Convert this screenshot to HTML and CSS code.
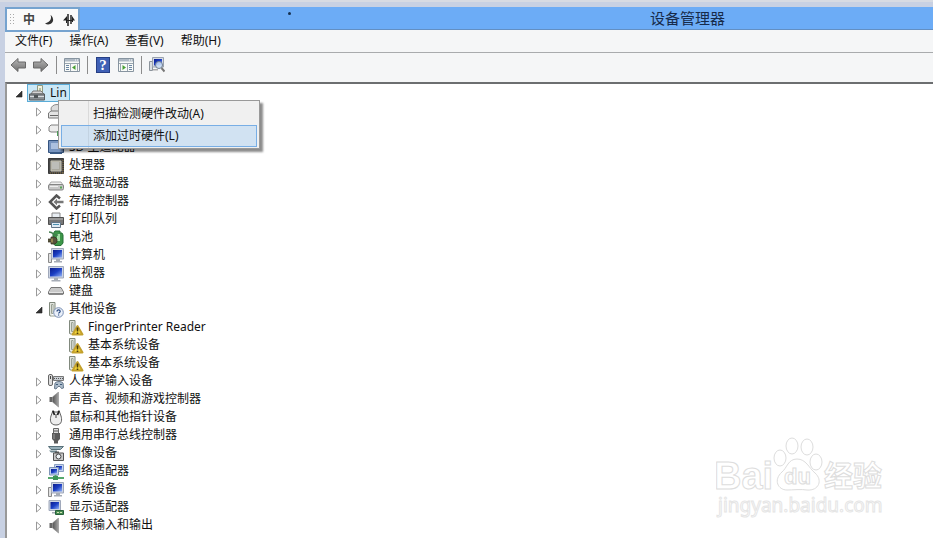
FILE: index.html
```html
<!DOCTYPE html>
<html lang="zh-CN">
<head>
  <meta charset="UTF-8">
  <meta name="viewport" content="width=device-width, initial-scale=1.0">
  <title>设备管理器</title>
  <link rel="stylesheet" href="styles.css">
</head>
<body>
  <!-- shared icons -->
  <svg class="defs" aria-hidden="true">
    <defs>
      <linearGradient id="metal" x1="0" y1="0" x2="0" y2="1"><stop offset="0" stop-color="#b8b8b8"/><stop offset="1" stop-color="#6e6e6e"/></linearGradient>
      <linearGradient id="screen" x1="0" y1="0" x2="1" y2="1"><stop offset="0" stop-color="#0b1c8c"/><stop offset=".5" stop-color="#1c3fc4"/><stop offset="1" stop-color="#8fb0f5"/></linearGradient>
      <linearGradient id="speaker" x1="0" y1="0" x2="1" y2="0"><stop offset="0" stop-color="#555"/><stop offset="1" stop-color="#a5a5a5"/></linearGradient>
    </defs>
    <symbol id="closed" viewBox="0 0 8 10"><path d="M1.500 1v8L6 5z" fill="#fff" stroke="#999"/></symbol>
    <symbol id="open" viewBox="0 0 8 10"><path d="M7 2v6H1z" fill="#333" stroke="#222" stroke-width=".6"/></symbol>
    <symbol id="arrow" viewBox="0 0 16 16"><path d="M1 8l7-6.500V5h7.500v6H8v3.500z" fill="url(#metal)" stroke="#686868"/></symbol>
    <symbol id="panel" viewBox="0 0 16 14">
      <path d="M.5.5h15v13H.5z" fill="#f8faf8" stroke="#8794a0"/>
      <path d="M1 1h14v2.500H1z" fill="#aeb9c4"/><path d="M11 2h1m1 0h1" stroke="#fff"/>
      <path d="M1 5.500h14M6.500 5v8M13.500 5v8" stroke="#9aa6b0"/>
      <path d="M2 7.500h3M2 9.500h3M2 11.500h3" stroke="#6b86a3"/>
      <path d="M11.500 7v5L8 9.500z" fill="#48a034"/>
    </symbol>
    <symbol id="panel-right" viewBox="0 0 16 14">
      <path d="M.5.5h15v13H.5z" fill="#f8faf8" stroke="#8794a0"/>
      <path d="M1 1h14v2.500H1z" fill="#aeb9c4"/><path d="M11 2h1m1 0h1" stroke="#fff"/>
      <path d="M1 5.500h14M9.500 5v8M2.500 5v8" stroke="#9aa6b0"/>
      <path d="M11 7.500h3M11 9.500h3M11 11.500h3" stroke="#6b86a3"/>
      <path d="M4.500 7v5L8 9.500z" fill="#48a034"/>
    </symbol>
    <symbol id="scan" viewBox="0 0 16 16">
      <path d="M.5 4.500h3v9h-3z" fill="#d8dde2" stroke="#8c949c"/>
      <path d="M3.500.5h11v9.500h-11z" fill="#d5dae4" stroke="#9aa2ae"/><path d="M5 2h8v6.500H5z" fill="url(#screen)"/>
      <path d="M4 12h5v1.500H4z" fill="#aaa"/>
      <circle cx="10" cy="8" r="3.500" fill="#cfe3fa" fill-opacity=".8" stroke="#6d7d90"/><path d="M12.500 11l3 3.500" stroke="#777" stroke-width="2"/>
    </symbol>
    <symbol id="root" viewBox="0 0 16 16">
      <path d="M8.500.5h5V9h-5z" fill="#f3f1de" stroke="#8f9a83"/><path d="M10 3h2v4h-2z" fill="#b5c39b"/>
      <path d="M2 9l2-3h8l3 3z" fill="#d5d5d5" stroke="#777"/><path d="M.5 9h15v6H.5z" fill="#8a9094" stroke="#565b5e"/>
      <path d="M1 11.500h14" stroke="#d9dde0"/><path d="M5 10h4v3H5z" fill="#4f5558"/>
    </symbol>
    <symbol id="disc" viewBox="0 0 16 16">
      <ellipse cx="9" cy="5" rx="6" ry="4.500" fill="#dcdcdc" stroke="#888"/><path d="M.5 9L3 7h10l2.500 2v5H.5z" fill="#e3e3e3" stroke="#777"/><path d="M2 11.500h8" stroke="#666"/>
    </symbol>
    <symbol id="ide" viewBox="0 0 16 16"><path d="M1 5l2-2h12v7H3L1 9z" fill="#ececec" stroke="#808080"/><path d="M9 9h5v5H9z" fill="#4c9b58"/></symbol>
    <symbol id="sd" viewBox="0 0 16 16"><path d="M.5.500h15v12H.5z" fill="#7794bf" stroke="#345480"/><path d="M3 3h9v6H3z" fill="#abc0df"/><path d="M2 13h12" stroke="#395984" stroke-width="2"/></symbol>
    <symbol id="cpu" viewBox="0 0 16 16"><path d="M.5.5h15v15H.5z" fill="#484848" stroke="#3a3a3a"/><path d="M3 3h10v10H3z" fill="#aaa89e" stroke="#c7c4b5"/><path d="M4 4h7v7H4z" fill="#bdbdb9"/><path d="M15 2v13M2 15h13" stroke="#8c7445" stroke-dasharray="1 1"/></symbol>
    <symbol id="disk" viewBox="0 0 16 16"><path d="M1 9l2-3h10l2 3z" fill="#efefef" stroke="#aaa"/><rect x=".5" y="8.500" width="15" height="5.500" rx="1.500" fill="#c6c6c6" stroke="#858585"/><path d="M2 10.500h8" stroke="#eee"/><path d="M12 11.500h2" stroke="#57a457" stroke-width="2"/></symbol>
    <symbol id="storage" viewBox="0 0 16 16"><path d="M12 4.500L8.500 1.500 2 8l6.500 6.500L12 11.500" fill="none" stroke="#555" stroke-width="2.500"/><path d="M5.500 8L9 4.800v2h6.500v2.400H9v2z" fill="#777"/></symbol>
    <symbol id="printer" viewBox="0 0 16 16"><path d="M4 1h8v5H4z" fill="#e8edf2" stroke="#888"/><path d="M.5 5.500h15v7H.5z" fill="#777" stroke="#4f4f4f"/><path d="M1 7h14" stroke="#bbb"/><path d="M3.500 10.500h9v5h-9z" fill="#dfeaf3" stroke="#627587"/><path d="M5 12.500h6" stroke="#4d90b0"/></symbol>
    <symbol id="battery" viewBox="0 0 16 16"><path d="M7 1h5v2h2l1 2v8l-2 2.500H7L5 13V4z" fill="#3d9648" stroke="#267136"/><path d="M9 4h3v7H9z" fill="#a5dfa7"/><path d="M1 2c5 0 4 4 9 3" fill="none" stroke="#437e4e" stroke-width="1.500"/><path d="M0 9h3V7h4l2 2v3l-2 2H3v-2H0" fill="#56523b" stroke="#302e20" stroke-width=".7"/><path d="M4 8.500v4" stroke="#d2b76b"/></symbol>
    <symbol id="computer" viewBox="0 0 16 16"><path d="M.5 5.500h3v9h-3z" fill="#e1e1e1" stroke="#8a8a8a"/><path d="M3.500.5h12v10.500h-12z" fill="#cdd4e3" stroke="#a0a9bb"/><path d="M5 2h9v7.500H5z" fill="url(#screen)"/><path d="M8 11h4v2h2v1.500H6V13h2z" fill="#a6acb6"/></symbol>
    <symbol id="monitor" viewBox="0 0 16 16"><path d="M.5.5h15v11.500H.5z" fill="#cdd4e3" stroke="#a0a9bb"/><path d="M2 2h12v8.500H2z" fill="url(#screen)"/><path d="M6 12h4v2h2.500v1.500h-9V14H6z" fill="#a6acb6"/></symbol>
    <symbol id="keyboard" viewBox="0 0 16 16"><path d="M3 3.500h10l2.500 4.500v2H.5V8z" fill="#e5e5e5" stroke="#777"/><path d="M3.500 5h9M2.500 7h11" stroke="#777" stroke-dasharray="1 1"/><path d="M1 10h14" stroke="#777" stroke-width="1.500"/></symbol>
    <symbol id="device" viewBox="0 0 16 16"><path d="M1.500.5h5.500v13H1.500z" fill="#e2e5df" stroke="#81897d"/><path d="M3.500 2.500h1.500v9H3.500zM7.500 9l2 5H2" fill="#fff" stroke="#9aa294"/></symbol>
    <symbol id="unknown" viewBox="0 0 16 16"><use href="#device"/><circle cx="10.500" cy="10.500" r="4.800" fill="#eaf0fa" stroke="#788eb3"/><path d="M9 9.500c0-2.200 3.200-2.200 3.200 0 0 1-1.600 1-1.600 2M10.600 12.500v1" fill="none" stroke="#24457d" stroke-width="1.200"/></symbol>
    <symbol id="warning" viewBox="0 0 16 16"><use href="#device"/><path d="M9.500 6L14.500 14.500h-10z" fill="#f5d73a" stroke="#c3a02c" stroke-width="2" stroke-linejoin="round"/><path d="M9.500 7.500v4m0 1v1.500" stroke="#4b3d0b" stroke-width="1.600"/></symbol>
    <symbol id="hid" viewBox="0 0 16 16"><rect x=".5" y=".5" width="4" height="11" rx="1.500" fill="#ddd" stroke="#666"/><path d="M2.500 2v3" stroke="#444"/><path d="M5.500 2.500h10v4h-10z" fill="#c9ced3" stroke="#777"/><path d="M6 4.500h9" stroke="#555" stroke-dasharray="1 1"/><path d="M7 9c2-2 6-2 8 0l.5 5-2 .5-1.500-2H10l-2 2.500-1.500-.5z" fill="#adbccb" stroke="#66788a"/><path d="M8 10.500h2M12 10.500h2" stroke="#3e5b78"/></symbol>
    <symbol id="sound" viewBox="0 0 16 16"><path d="M1.500 5h3v5h-3z" fill="#666"/><path d="M4.500 5l6-5v15l-6-5z" fill="url(#speaker)" stroke="#8b8b8b" stroke-width=".6"/></symbol>
    <symbol id="mouse" viewBox="0 0 16 16"><path d="M5 .5L3 6c-1 3-1.500 9 5 9s6-6 5-9L11 .5 9.500 2h-3z" fill="#eee" stroke="#606060"/><path d="M5 1l1.500 4M11 1L9.500 5" stroke="#222" stroke-width="1.800"/><path d="M8 4v4" stroke="#777" stroke-width="1.500"/></symbol>
    <symbol id="usb" viewBox="0 0 16 16"><path d="M5.500.5h5v5h-5z" fill="#ddd" stroke="#666"/><path d="M7 2v2M9 2v2" stroke="#555"/><path d="M4 5h8v6l-2 2v2.500H6V13l-2-2z" fill="#5b5b5b"/><path d="M6 6v5" stroke="#999"/></symbol>
    <symbol id="imaging" viewBox="0 0 16 16"><path d="M.5.500h15l-3 3H3z" fill="#96aeb8" stroke="#57707a"/><path d="M1 4.500h8v2H3z" fill="#6e8790"/><path d="M5.500 7h10v7.500h-10z" fill="#c8c8c8" stroke="#555"/><path d="M7 5.500h4V7H7z" fill="#555"/><circle cx="10.500" cy="10.500" r="2.500" fill="#eef3f6" stroke="#444"/></symbol>
    <symbol id="network" viewBox="0 0 16 16"><path d="M6.500.5h9v7h-9z" fill="#c5d3ed" stroke="#8ba0c2"/><path d="M8 2h6v4H8z" fill="url(#screen)"/><path d="M1.500 3.500h9v7.500h-9z" fill="#c5d3ed" stroke="#7f95b8"/><path d="M3 5h6v4.500H3z" fill="url(#screen)"/><path d="M0 14h16M7.500 11v4" stroke="#55a86c" stroke-width="2"/><path d="M5 12h5v4H5z" fill="#3e9457"/></symbol>
    <symbol id="display" viewBox="0 0 16 16"><path d="M1 .5h11.500v10H1z" fill="#cdd4e3" stroke="#a0a9bb"/><path d="M2.500 2H11v7H2.500z" fill="url(#screen)"/><path d="M4 12h6v1.500H4z" fill="#a6acb6"/><path d="M7.500 10.500h8v4h-8z" fill="#498d54" stroke="#28613a"/><path d="M9 12.500h5" stroke="#d5e4b3" stroke-dasharray="2 1"/></symbol>
  </svg>

  <div class="window">
    <header class="titlebar"><h1>设备管理器</h1></header>

    <div class="ime">
      <span class="grip"></span>
      <span>中</span>
      <svg width="12" height="12" viewBox="0 0 12 12"><path d="M7.500 1c1.500 3.500 0 7-5.500 8.500 4 2.500 9-.5 8-4.500C9.700 3 8.500 1.500 7.500 1z" fill="#333"/></svg>
      <svg width="12" height="12" viewBox="0 0 12 12"><path d="M5 0v12M8 1v9" stroke="#222" stroke-width="1.500"/><path d="M4 2L0 6.500h3V9h1zM9 2l3 4.500H10V8H9z" fill="#222"/><path d="M3 6.500h7" stroke="#222"/></svg>
    </div>

    <nav class="menubar">
      <button>文件(F)</button>
      <button>操作(A)</button>
      <button>查看(V)</button>
      <button>帮助(H)</button>
    </nav>

    <div class="toolbar">
      <button aria-label="后退"><svg class="icon"><use href="#arrow"/></svg></button>
      <button aria-label="前进"><svg class="icon flip"><use href="#arrow"/></svg></button>
      <span class="separator"></span>
      <button aria-label="显示控制台树"><svg class="icon"><use href="#panel"/></svg></button>
      <span class="separator"></span>
      <button class="help" aria-label="帮助">?</button>
      <button aria-label="显示操作窗格"><svg class="icon"><use href="#panel-right"/></svg></button>
      <span class="separator"></span>
      <button aria-label="扫描检测硬件改动"><svg class="icon"><use href="#scan"/></svg></button>
    </div>

    <main class="content">
      <ul class="tree">
        <li class="root"><svg class="expander"><use href="#open"/></svg><span class="selected"><svg class="icon"><use href="#root"/></svg><span>Lin</span></span></li>
        <li><svg class="expander"><use href="#closed"/></svg><svg class="icon"><use href="#disc"/></svg></li>
        <li><svg class="expander"><use href="#closed"/></svg><svg class="icon"><use href="#ide"/></svg></li>
        <li><svg class="expander"><use href="#closed"/></svg><svg class="icon"><use href="#sd"/></svg><span>SD 主适配器</span></li>
        <li><svg class="expander"><use href="#closed"/></svg><svg class="icon"><use href="#cpu"/></svg><span>处理器</span></li>
        <li><svg class="expander"><use href="#closed"/></svg><svg class="icon"><use href="#disk"/></svg><span>磁盘驱动器</span></li>
        <li><svg class="expander"><use href="#closed"/></svg><svg class="icon"><use href="#storage"/></svg><span>存储控制器</span></li>
        <li><svg class="expander"><use href="#closed"/></svg><svg class="icon"><use href="#printer"/></svg><span>打印队列</span></li>
        <li><svg class="expander"><use href="#closed"/></svg><svg class="icon"><use href="#battery"/></svg><span>电池</span></li>
        <li><svg class="expander"><use href="#closed"/></svg><svg class="icon"><use href="#computer"/></svg><span>计算机</span></li>
        <li><svg class="expander"><use href="#closed"/></svg><svg class="icon"><use href="#monitor"/></svg><span>监视器</span></li>
        <li><svg class="expander"><use href="#closed"/></svg><svg class="icon"><use href="#keyboard"/></svg><span>键盘</span></li>
        <li><svg class="expander"><use href="#open"/></svg><svg class="icon"><use href="#unknown"/></svg><span>其他设备</span></li>
        <li class="child"><svg class="icon"><use href="#warning"/></svg><span>FingerPrinter Reader</span></li>
        <li class="child"><svg class="icon"><use href="#warning"/></svg><span>基本系统设备</span></li>
        <li class="child"><svg class="icon"><use href="#warning"/></svg><span>基本系统设备</span></li>
        <li><svg class="expander"><use href="#closed"/></svg><svg class="icon"><use href="#hid"/></svg><span>人体学输入设备</span></li>
        <li><svg class="expander"><use href="#closed"/></svg><svg class="icon"><use href="#sound"/></svg><span>声音、视频和游戏控制器</span></li>
        <li><svg class="expander"><use href="#closed"/></svg><svg class="icon"><use href="#mouse"/></svg><span>鼠标和其他指针设备</span></li>
        <li><svg class="expander"><use href="#closed"/></svg><svg class="icon"><use href="#usb"/></svg><span>通用串行总线控制器</span></li>
        <li><svg class="expander"><use href="#closed"/></svg><svg class="icon"><use href="#imaging"/></svg><span>图像设备</span></li>
        <li><svg class="expander"><use href="#closed"/></svg><svg class="icon"><use href="#network"/></svg><span>网络适配器</span></li>
        <li><svg class="expander"><use href="#closed"/></svg><svg class="icon"><use href="#computer"/></svg><span>系统设备</span></li>
        <li><svg class="expander"><use href="#closed"/></svg><svg class="icon"><use href="#display"/></svg><span>显示适配器</span></li>
        <li><svg class="expander"><use href="#closed"/></svg><svg class="icon"><use href="#sound"/></svg><span>音频输入和输出</span></li>
      </ul>

      <div class="context-menu">
        <button>扫描检测硬件改动(A)</button>
        <button class="active">添加过时硬件(L)</button>
      </div>

      <svg class="watermark" width="172" height="86" viewBox="0 0 172 86">
        <g class="outline">
          <text class="brand" x="-2" y="53">Bai</text>
          <ellipse cx="64" cy="22" rx="6" ry="8"/>
          <ellipse cx="76" cy="10" rx="6" ry="8"/>
          <ellipse cx="91" cy="11" rx="6" ry="8"/>
          <ellipse cx="100" cy="26" rx="6" ry="8"/>
          <path d="M81 23c-9 0-10 9-15 13-9 8-4 18 5 18 5 0 15-1 20 0 12 1 16-10 8-17-6-5-9-14-18-14z"/>
          <text class="du" x="68" y="48">du</text>
          <text class="cn" x="108" y="51">经验</text>
        </g>
        <text class="site" x="2" y="76">jingyan.baidu.com</text>
      </svg>
    </main>
  </div>
</body>
</html>
```
FILE: styles.css
```css
* { box-sizing: border-box; }
body {
  margin: 0;
  height: 100vh;
  overflow: hidden;
  padding: 5px 0 0 5px;
  background: #c8d1e3;
  border-top: 2px solid #d7dbe3;
  font-family: "Noto Sans", "Noto Sans CJK SC", sans-serif;
  font-size: 12px;
  line-height: 18px;
  color: #111;
}
button {
  font: inherit;
  color: inherit;
  padding: 0;
  border: none;
  background: none;
}
.defs {
  position: absolute;
  width: 0;
  height: 0;
}
.window {
  position: relative;
  display: flex;
  flex-direction: column;
  height: 100%;
  background: #f5f6f7;
}
.titlebar {
  display: grid;
  grid-template-columns: 31fr auto 10fr;
  align-items: center;
  height: 23px;
  background: #6cacf6;
  border-bottom: 1px solid #638fc2;
}
.titlebar::after {
  content: "";
  grid-column: 1;
  grid-row: 1;
  justify-self: center;
  width: 3px;
  height: 3px;
  border-radius: 2px;
  background: #16304f;
  margin: 0 76px 10px 0;
}
h1 {
  grid-column: 2;
  margin: 0;
  font-size: 15px;
  font-weight: normal;
  line-height: 22px;
  color: #172b4a;
}
.ime {
  position: absolute;
  top: 0;
  left: 0;
  display: flex;
  align-items: center;
  gap: 8px;
  width: 75px;
  height: 25px;
  padding-left: 2px;
  background: #fafafa;
  border: 2px solid #76a3cf;
  font-weight: bold;
  color: #444;
}
.grip {
  width: 6px;
  height: 13px;
  background: radial-gradient(circle, #aaa 1px, transparent 1px) 0 0 / 3px 3px;
}
.menubar {
  display: flex;
  gap: 17px;
  height: 23px;
  padding-left: 10px;
  border-bottom: 1px solid #a9abad;
}
.toolbar {
  display: flex;
  align-items: center;
  gap: 7px;
  height: 24px;
  padding-left: 5px;
}
.toolbar button {
  display: flex;
}
.separator {
  width: 1px;
  height: 18px;
  background: #8c8c8c;
}
.icon {
  flex: none;
  width: 16px;
  height: 16px;
}
.flip { transform: scaleX(-1); }
.toolbar .help {
  justify-content: center;
  width: 14px;
  height: 16px;
  margin: 0 1px;
  background: #3f60b5;
  border: 1px solid #263f85;
  color: #fff;
  font-family: "Liberation Serif", serif;
  font-size: 15px;
  font-weight: bold;
  line-height: 14px;
}
.content {
  position: relative;
  flex: 1;
  margin-top: 5px;
  min-height: 0;
  overflow: hidden;
  background: #fff;
  border-top: 2px solid #6c6e70;
  border-left: 2px solid #999;
}
.tree {
  list-style: none;
  margin: 0;
  padding: 0;
}
.tree li {
  display: flex;
  align-items: center;
  gap: 5px;
  height: 18px;
  padding-left: 28px;
  white-space: nowrap;
}
.tree .root {
  gap: 4px;
  padding-left: 8px;
}
.tree .child {
  gap: 4px;
  padding-left: 61px;
}
.expander {
  width: 8px;
  height: 10px;
  margin-top: 2px;
}
.tree li > .icon {
  margin-top: 2px;
}
.selected {
  display: flex;
  align-items: center;
  gap: 5px;
  height: 18px;
  padding: 0 2px 0 1px;
  background: #cbe8f6;
  border: 1px solid #5aacd8;
}
.context-menu {
  position: absolute;
  top: 16px;
  left: 51px;
  width: 202px;
  padding: 2px 2px 1px;
  background: linear-gradient(90deg, transparent 29px, #dadada 29px, #dadada 30px, transparent 30px) #f0f0f0;
  border: 1px solid #999;
  box-shadow: 3px 3px 2px rgba(0, 0, 0, .45);
}
.context-menu button {
  display: block;
  width: 100%;
  height: 22px;
  padding-left: 31px;
  border: 1px solid transparent;
  line-height: 20px;
  text-align: left;
}
.context-menu .active {
  background: linear-gradient(90deg, transparent 26px, #c3d3e2 26px, #c3d3e2 27px, transparent 27px) #d1e2f2;
  border-color: #78aee5;
}
.watermark {
  position: absolute;
  right: 45px;
  bottom: 16px;
}
.outline {
  fill: #fff;
  stroke: #ddd;
}
.watermark .brand {
  font: bold 38px "Liberation Sans", sans-serif;
}
.watermark .du {
  font: bold 22px "Liberation Sans", sans-serif;
}
.watermark .cn {
  font: bold 29px "Noto Sans CJK SC", sans-serif;
}
.site {
  font: 19px "Noto Sans", sans-serif;
  fill: #fff;
  stroke: #e5e5e5;
}
```
